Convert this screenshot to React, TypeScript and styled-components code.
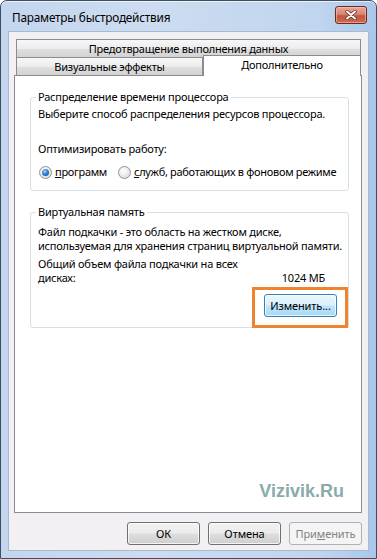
import React from 'react';
import styled, { createGlobalStyle, css } from 'styled-components';

const GlobalStyle = createGlobalStyle`
  html, body {
    margin: 0;
    padding: 0;
    background: #ffffff;
  }
  body {
    font-family: "Noto Sans", "Open Sans", sans-serif;
    font-size: 11px;
    letter-spacing: -0.22px;
    color: #000;
  }
`;

const Window = styled.div`
  box-sizing: border-box;
  width: 377px;
  height: 559px;
  border: 1px solid #3d4e63;
  border-radius: 7px 7px 0 0;
  padding: 0 7px 7px 7px;
  display: flex;
  flex-direction: column;
  background: linear-gradient(90deg, #c3d6ee 0%, #cddcf0 40%, #c0d5ee 85%, #a9c7ea 100%);
  box-shadow: inset 0 1px 0 rgba(255, 255, 255, 0.7);
`;

const TitleBar = styled.div`
  height: 30px;
  display: flex;
  align-items: center;
  justify-content: space-between;
  padding: 0 2px 0 4px;
`;

const Title = styled.span`
  font-size: 11.8px;
  color: #000;
  margin-top: 2px;
`;

const CloseButton = styled.div`
  width: 30px;
  height: 16px;
  margin-top: -3px;
  border: 1px solid #6b2b20;
  border-radius: 3px;
  display: flex;
  align-items: center;
  justify-content: center;
  background: linear-gradient(#e9a89a 0%, #d98573 45%, #c5553f 55%, #d06a52 100%);
  box-shadow: inset 0 0 0 1px rgba(255, 210, 200, 0.5);
`;

const Client = styled.div`
  flex: 1;
  display: flex;
  flex-direction: column;
  background: #f3f0f3;
  border: 1px solid #a6bad2;
  padding: 7px 6px 5px 5px;
`;

const TabRow = styled.div`
  display: flex;
  padding-left: 2px;
`;

const Tab = styled.div<{ $selected?: boolean; $width: number }>`
  box-sizing: border-box;
  width: ${(p) => p.$width}px;
  height: 18px;
  border: 1px solid #898c95;
  border-bottom: none;
  display: flex;
  align-items: center;
  justify-content: center;
  background: linear-gradient(#f7f7f7 0%, #ececec 50%, #dedede 55%, #d3d3d3 100%);
  white-space: nowrap;
  ${(p) =>
    p.$selected &&
    css`
      height: 21px;
      margin-top: -2px;
      margin-bottom: -1px;
      padding-bottom: 3px;
      background: #ffffff;
      position: relative;
      z-index: 1;
    `}
`;

const Panel = styled.div`
  flex: 1;
  display: flex;
  flex-direction: column;
  background: #ffffff;
  border: 1px solid #898c95;
  padding: 13px 12px 0 15px;
`;

const Group = styled.fieldset`
  margin: 0 0 13px 0;
  padding: 2px 11px 10px 7px;
  border: 1px solid #d5dfe5;
  border-radius: 3px;
  min-width: 0;
`;

const Legend = styled.legend`
  padding: 0 2px;
  margin-left: -2px;
  line-height: 16px;
`;

const Text = styled.div<{ $gap?: number }>`
  line-height: 14px;
  margin-top: ${(p) => p.$gap ?? 0}px;
  white-space: nowrap;
`;

const RadioRow = styled.div`
  display: flex;
  align-items: center;
  gap: 10px;
  margin-top: 8px;
  line-height: 16px;
  letter-spacing: -0.3px;
  white-space: nowrap;
`;

const RadioOption = styled.label`
  display: flex;
  align-items: center;
  gap: 3px;
  margin-left: 1px;
`;

const RadioCircle = styled.span<{ $checked?: boolean }>`
  box-sizing: border-box;
  width: 13px;
  height: 13px;
  border-radius: 50%;
  border: 1px solid #8f9499;
  background: radial-gradient(circle at 40% 35%, #ffffff 0%, #e8e8e8 55%, #cfcfcf 100%);
  display: flex;
  align-items: center;
  justify-content: center;
  &::after {
    content: '';
    width: 7px;
    height: 7px;
    border-radius: 50%;
    display: ${(p) => (p.$checked ? 'block' : 'none')};
    background: radial-gradient(circle at 40% 35%, #a9d4f9 0%, #2f7fd0 45%, #143f7c 100%);
  }
`;

const ValueRow = styled.div`
  display: flex;
  justify-content: space-between;
  align-items: flex-end;
  margin-top: 4px;
  padding-right: 12px;
`;

const ButtonRow = styled.div<{ $top?: number }>`
  display: flex;
  justify-content: flex-end;
  gap: 8px;
  margin-top: ${(p) => p.$top ?? 0}px;
`;

const Highlight = styled.span`
  position: relative;
  display: inline-flex;
  &::after {
    content: '';
    position: absolute;
    top: -7px;
    bottom: -11px;
    left: -12px;
    right: -11px;
    border: 3px solid #f0832f;
  }
`;

type Variant = 'normal' | 'hot' | 'disabled';

const Button = styled.button<{ $variant?: Variant; $width: number }>`
  box-sizing: border-box;
  width: ${(p) => p.$width}px;
  height: 23px;
  font-family: inherit;
  font-size: 11px;
  letter-spacing: -0.1px;
  padding: 0 0 1px;
  border-radius: 3px;
  border: 1px solid #707070;
  color: #000;
  background: linear-gradient(#f2f2f2 0%, #ebebeb 48%, #dddddd 52%, #cfcfcf 100%);
  box-shadow: inset 0 0 0 1px rgba(255, 255, 255, 0.75);
  ${(p) =>
    p.$variant === 'hot' &&
    css`
      border-color: #3c7fb1;
      background: linear-gradient(#eaf6fd 0%, #d9f0fc 48%, #bee6fd 52%, #a7d9f5 100%);
    `}
  ${(p) =>
    p.$variant === 'disabled' &&
    css`
      border-color: #adb2b5;
      background: #f4f4f4;
      color: #838383;
      box-shadow: none;
    `}
`;

const Watermark = styled.div`
  margin-top: auto;
  align-self: flex-end;
  margin-right: 5px;
  margin-bottom: 10px;
  font-family: "Liberation Sans", Arial, sans-serif;
  font-weight: bold;
  font-size: 18px;
  letter-spacing: 0;
  color: #88abab;
`;

const CloseIcon = () => (
  <svg width="14" height="10" viewBox="0 0 14 10">
    <path d="M3 1.5 L11 8.5 M11 1.5 L3 8.5" stroke="#5a2a22" strokeWidth="3.4" strokeLinecap="round" />
    <path d="M3 1.5 L11 8.5 M11 1.5 L3 8.5" stroke="#ffffff" strokeWidth="2" strokeLinecap="round" />
  </svg>
);

export default function App() {
  return (
    <>
      <GlobalStyle />
      <Window>
        <TitleBar>
          <Title>Параметры быстродействия</Title>
          <CloseButton>
            <CloseIcon />
          </CloseButton>
        </TitleBar>
        <Client>
          <TabRow>
            <Tab $width={345}>Предотвращение выполнения данных</Tab>
          </TabRow>
          <TabRow>
            <Tab $width={187}>Визуальные эффекты</Tab>
            <Tab $width={158} $selected>
              Дополнительно
            </Tab>
          </TabRow>
          <Panel>
            <Group>
              <Legend>Распределение времени процессора</Legend>
              <Text>Выберите способ распределения ресурсов процессора.</Text>
              <Text $gap={21}>Оптимизировать работу:</Text>
              <RadioRow>
                <RadioOption>
                  <RadioCircle $checked />
                  <span>
                    <u>п</u>рограмм
                  </span>
                </RadioOption>
                <RadioOption>
                  <RadioCircle />
                  <span>
                    <u>с</u>лужб, работающих в фоновом режиме
                  </span>
                </RadioOption>
              </RadioRow>
            </Group>
            <Group>
              <Legend>Виртуальная память</Legend>
              <Text $gap={3}>
                Файл подкачки - это область на жестком диске,
                <br />
                используемая для хранения страниц виртуальной памяти.
              </Text>
              <ValueRow>
                <Text>
                  Общий объем файла подкачки на всех
                  <br />
                  дисках:
                </Text>
                <Text>1024 МБ</Text>
              </ValueRow>
              <ButtonRow $top={9}>
                <Highlight>
                  <Button $variant="hot" $width={73}>
                    Изменить...
                  </Button>
                </Highlight>
              </ButtonRow>
            </Group>
            <Watermark>Vizivik.Ru</Watermark>
          </Panel>
          <ButtonRow $top={9}>
            <Button $width={73}>ОК</Button>
            <Button $width={73}>Отмена</Button>
            <Button $width={73} $variant="disabled">
              При<u>м</u>енить
            </Button>
          </ButtonRow>
        </Client>
      </Window>
    </>
  );
}
